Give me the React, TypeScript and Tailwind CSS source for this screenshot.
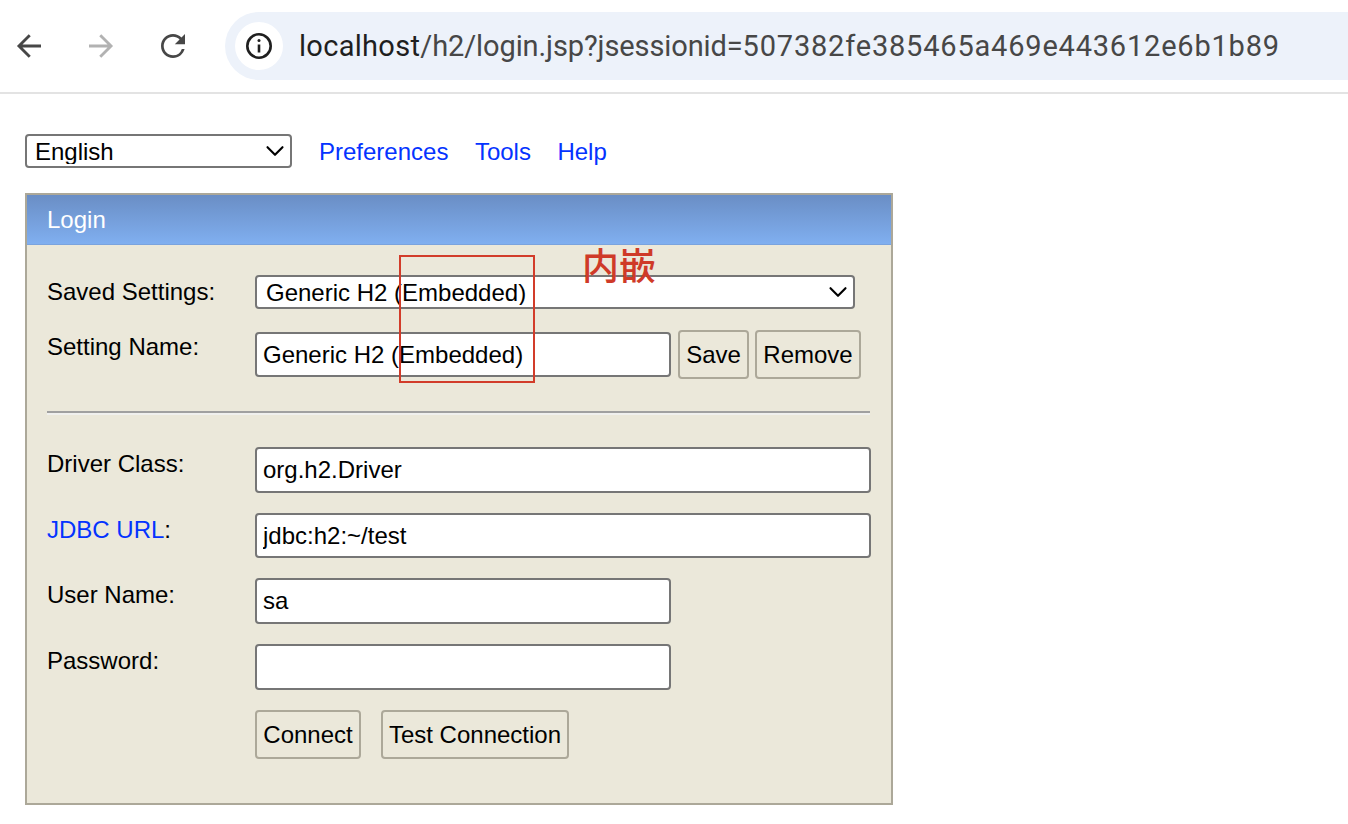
import { ChevronDown } from "lucide-react";

const sans = "font-['Liberation_Sans','Noto_Sans_CJK_SC',sans-serif]";
const inputCls =
  "h-full w-full rounded-[4px] border-2 border-[#767676] bg-white px-[6px] text-[24px] text-black outline-none";
const btnCls =
  "h-[49px] whitespace-nowrap rounded-[4px] border-2 border-[#aca899] bg-[#ebe8da] text-[24px] text-black";

function Toolbar() {
  return (
    <div className="flex h-[94px] items-center border-b-2 border-[#e3e3e3] bg-white">
      <div className="flex w-[225px] shrink-0 items-center pl-[11px]">
        <svg width="36" height="36" viewBox="0 0 24 24" fill="none" stroke="#474747" strokeWidth="1.9">
          <path d="M20 12H5.5M12.5 4.8 5.3 12l7.2 7.2" />
        </svg>
        <svg className="ml-[36px]" width="36" height="36" viewBox="0 0 24 24" fill="none" stroke="#b2b2b2" strokeWidth="1.9">
          <path d="M4 12h14.5M11.5 4.8l7.2 7.2-7.2 7.2" />
        </svg>
        <svg className="ml-[36px]" width="36" height="36" viewBox="0 0 24 24" fill="#474747">
          <path d="M17.65 6.35A7.958 7.958 0 0 0 12 4c-4.42 0-7.99 3.58-7.99 8s3.57 8 7.99 8c3.73 0 6.84-2.55 7.73-6h-1.85A6.2 6.2 0 0 1 12 18.2c-3.42 0-6.2-2.78-6.2-6.2S8.58 5.8 12 5.8c1.72 0 3.25.72 4.37 1.83L13.2 10.8H20V4l-2.35 2.35z" />
        </svg>
      </div>
      <div className="flex h-[68px] flex-1 items-center rounded-l-[34px] bg-[#edf2fa] pl-[10px]">
        <div className="flex size-[48px] items-center justify-center rounded-full bg-white">
          <svg width="32" height="32" viewBox="0 0 32 32" fill="none" stroke="#1f1f1f" strokeWidth="2.6">
            <circle cx="16" cy="16" r="11.7" />
            <path d="M16 14.5v8" />
            <circle cx="16" cy="10.4" r="1.5" fill="#1f1f1f" stroke="none" />
          </svg>
        </div>
        <span className="ml-[16px] mt-[2px] whitespace-nowrap font-['Roboto',sans-serif] text-[29px] tracking-[0.3px] text-[#1f1f1f]">
          localhost
          <span className="tracking-[-0.1px] text-[#474747]">
            /h2/login.jsp?jsessionid=
            <span className="tracking-[0.8px]">507382fe385465a469e443612e6b1b89</span>
          </span>
        </span>
      </div>
    </div>
  );
}

function FakeSelect({ value, width, pad }: { value: string; width: string; pad: string }) {
  return (
    <div className={`relative h-[34px] ${width}`}>
      <select
        defaultValue={value}
        className={`h-full w-full appearance-none rounded-[4px] border-2 border-[#767676] bg-white pt-[2px] text-[24px] leading-none text-black outline-none ${pad}`}
      >
        <option>{value}</option>
      </select>
      <ChevronDown className="absolute right-[2px] top-[2px] size-[30px] text-black" strokeWidth={1.7} />
    </div>
  );
}

function Row({
  label,
  labelTop,
  className,
  children,
}: {
  label: React.ReactNode;
  labelTop: string;
  className: string;
  children: React.ReactNode;
}) {
  return (
    <div className={`flex ${className}`}>
      <div className={`w-[208px] shrink-0 text-[24px] leading-[28px] text-black ${labelTop}`}>{label}</div>
      {children}
    </div>
  );
}

export default function App() {
  return (
    <div className={`relative h-[824px] w-[1348px] overflow-hidden bg-white ${sans}`}>
      <Toolbar />

      <div className="ml-[25px] mt-[40px] flex items-center">
        <FakeSelect value="English" width="w-[267px]" pad="pl-[8px]" />
        <div className="ml-[27px] flex h-[34px] gap-[26.5px] text-[24px] leading-[36px] text-[#0433ff]">
          <a>Preferences</a>
          <a>Tools</a>
          <a>Help</a>
        </div>
      </div>

      <div className="ml-[25px] mt-[25px] w-[868px] border-2 border-[#aca899] bg-[#ebe8da]">
        <div className="h-[50px] border-b border-[#7aa3de] bg-gradient-to-b from-[#6a8ec5] to-[#80aff0] pl-[20px] text-[24px] leading-[50px] text-white">
          Login
        </div>
        <div className="pb-[44px] pl-[20px]">
          <Row label="Saved Settings:" labelTop="pt-[3px]" className="pt-[30px]">
            <FakeSelect value="Generic H2 (Embedded)" width="w-[600px]" pad="pl-[9px]" />
          </Row>
          <Row label="Setting Name:" labelTop="pt-[3px]" className="mt-[21px] h-[49px]">
            <div className="mt-[2px] h-[45px] w-[416px]">
              <input readOnly value="Generic H2 (Embedded)" className={inputCls} />
            </div>
            <button className={`${btnCls} ml-[7px] w-[71px]`}>Save</button>
            <button className={`${btnCls} ml-[6px] w-[106px]`}>Remove</button>
          </Row>
          <hr className="mr-[21px] mt-[32px] h-[4px] border-0 border-b-2 border-[#f0f0ee] bg-[#a0a0a0]" />
          <Row label="Driver Class:" labelTop="pt-[3px]" className="mt-[32px] h-[46px]">
            <div className="h-full w-[616px]">
              <input readOnly value="org.h2.Driver" className={inputCls} />
            </div>
          </Row>
          <Row
            label={
              <>
                <a className="text-[#0433ff]">JDBC URL</a>:
              </>
            }
            labelTop="pt-[3px]"
            className="mt-[20px] h-[45px]"
          >
            <div className="h-full w-[616px]">
              <input readOnly value="jdbc:h2:~/test" className={inputCls} />
            </div>
          </Row>
          <Row label="User Name:" labelTop="pt-[3px]" className="mt-[20px] h-[46px]">
            <div className="h-full w-[416px]">
              <input readOnly value="sa" className={inputCls} />
            </div>
          </Row>
          <Row label="Password:" labelTop="pt-[3px]" className="mt-[20px] h-[46px]">
            <div className="h-full w-[416px]">
              <input readOnly type="password" value="" className={inputCls} />
            </div>
          </Row>
          <div className="ml-[208px] mt-[20px] flex gap-[20px]">
            <button className={`${btnCls} w-[106px]`}>Connect</button>
            <button className={`${btnCls} w-[188px]`}>Test Connection</button>
          </div>
        </div>
      </div>

      {/* annotation drawn on top of the screenshot */}
      <div className="absolute left-[399px] top-[255px] h-[128px] w-[136px] border-2 border-[#d23c2a]" />
      <div className="absolute left-[582px] top-[246px] text-[37px] font-medium leading-[44px] text-[#cf3a28]">内嵌</div>
    </div>
  );
}
